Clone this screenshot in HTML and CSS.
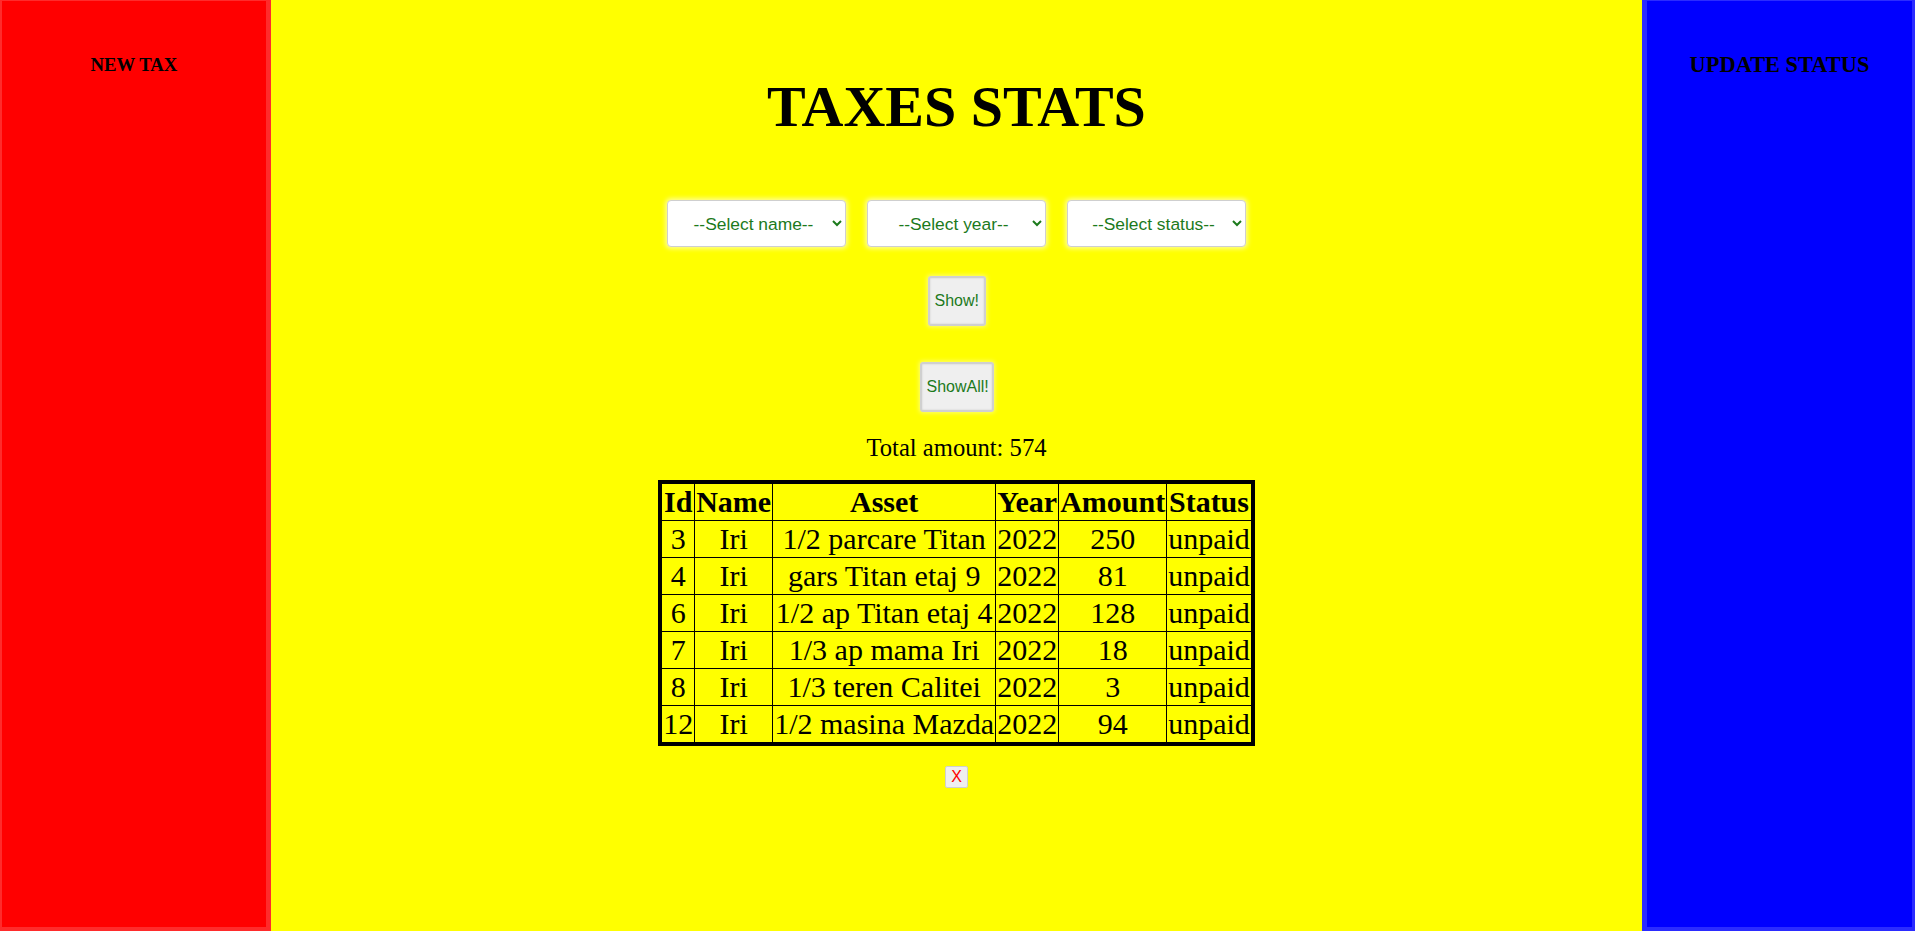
FILE: index.html
```html
<!DOCTYPE html>
<html>
<head>
<meta charset="utf-8">
<title>Taxes Stats</title>
<link rel="stylesheet" href="styles.css">
</head>
<body>
<div class="layout">
  <aside class="side side-left">
    <div class="side-title side-title-new">NEW TAX</div>
  </aside>
  <main class="main">
    <h1 class="title">TAXES STATS</h1>
    <div class="filters">
      <select class="filter"><option>--Select name--</option></select>
      <select class="filter"><option>--Select year--</option></select>
      <select class="filter"><option>--Select status--</option></select>
    </div>
    <button class="btn btn-show">Show!</button>
    <button class="btn btn-showall">ShowAll!</button>
    <div class="total">Total amount: 574</div>
    <table class="taxes">
      <thead>
        <tr><th>Id</th><th>Name</th><th>Asset</th><th>Year</th><th>Amount</th><th>Status</th></tr>
      </thead>
      <tbody>
        <tr><td>3</td><td>Iri</td><td>1/2 parcare Titan</td><td>2022</td><td>250</td><td>unpaid</td></tr>
        <tr><td>4</td><td>Iri</td><td>gars Titan etaj 9</td><td>2022</td><td>81</td><td>unpaid</td></tr>
        <tr><td>6</td><td>Iri</td><td>1/2 ap Titan etaj 4</td><td>2022</td><td>128</td><td>unpaid</td></tr>
        <tr><td>7</td><td>Iri</td><td>1/3 ap mama Iri</td><td>2022</td><td>18</td><td>unpaid</td></tr>
        <tr><td>8</td><td>Iri</td><td>1/3 teren Calitei</td><td>2022</td><td>3</td><td>unpaid</td></tr>
        <tr><td>12</td><td>Iri</td><td>1/2 masina Mazda</td><td>2022</td><td>94</td><td>unpaid</td></tr>
      </tbody>
    </table>
    <button class="btn-close">X</button>
  </main>
  <aside class="side side-right">
    <div class="side-title side-title-update">UPDATE STATUS</div>
  </aside>
</div>
</body>
</html>
```

FILE: styles.css
```css
html, body {
  margin: 0;
  padding: 0;
  height: 100%;
}
body {
  font-family: "Liberation Serif", "Times New Roman", serif;
  background: #ffff00;
  color: #000;
}
.layout {
  display: flex;
  height: 931px;
}
.side {
  box-sizing: border-box;
  height: 100%;
  text-align: center;
  font-weight: bold;
}
.side-left {
  width: 271px;
  background: #ff0000;
  border-style: solid;
  border-color: #ff2b2b;
  border-width: 1px 5px 4px 2px;
  padding-top: 53px;
}
.side-right {
  width: 273px;
  background: #0000ff;
  border-style: solid;
  border-color: #2b2bff;
  border-width: 1px 3px 4px 5px;
  padding-top: 51px;
}
.side-title-new {
  font-size: 18.72px;
}
.side-title-update {
  font-size: 22.4px;
}
.main {
  flex: 1;
  display: flex;
  flex-direction: column;
  align-items: center;
  background: #ffff00;
}
.title {
  margin: 73px 0 0;
  font-size: 58px;
  font-weight: bold;
  line-height: normal;
}
.filters {
  display: flex;
  gap: 21px;
  margin-top: 60px;
}
.filter {
  width: 179px;
  height: 47px;
  box-sizing: border-box;
  background: #fff;
  border: 1px solid #cfcfcf;
  border-radius: 4px;
  box-shadow: 0 0 4px 2px rgba(255, 255, 255, 0.55);
  font-family: "Liberation Sans", Arial, sans-serif;
  font-size: 17.4px;
  color: #1c7a1c;
  text-align: center;
  text-align-last: center;
  padding: 0 2px 0 8px;
}
.btn {
  font-family: "Liberation Sans", Arial, sans-serif;
  font-size: 16px;
  color: #1c7a1c;
  background: #efefef;
  border: 2px solid #d0d0d0;
  border-radius: 3px;
  box-shadow: inset 0 0 2px rgba(0, 0, 0, 0.15), 0 0 4px 1px rgba(255, 255, 255, 0.45);
  height: 50px;
  padding: 0 5px;
}
.btn-show {
  margin-top: 29px;
  width: 58px;
}
.btn-showall {
  margin-top: 36px;
  width: 74px;
}
.total {
  margin-top: 22px;
  font-size: 24.6px;
  line-height: normal;
}
.taxes {
  margin-top: 18px;
  border-collapse: collapse;
  border: 4px solid #000;
  font-size: 30px;
  background: #ffff00;
}
.taxes th,
.taxes td {
  border: 1px solid #000;
  padding: 1px;
  text-align: center;
  line-height: normal;
}
.taxes th {
  font-weight: bold;
}
.btn-close {
  margin-top: 20px;
  width: 23px;
  height: 22px;
  padding: 0;
  font-family: "Liberation Sans", Arial, sans-serif;
  font-size: 16px;
  color: #ff0000;
  background: #efefef;
  border: 1px solid #cfcfcf;
  border-radius: 2px;
}
```
